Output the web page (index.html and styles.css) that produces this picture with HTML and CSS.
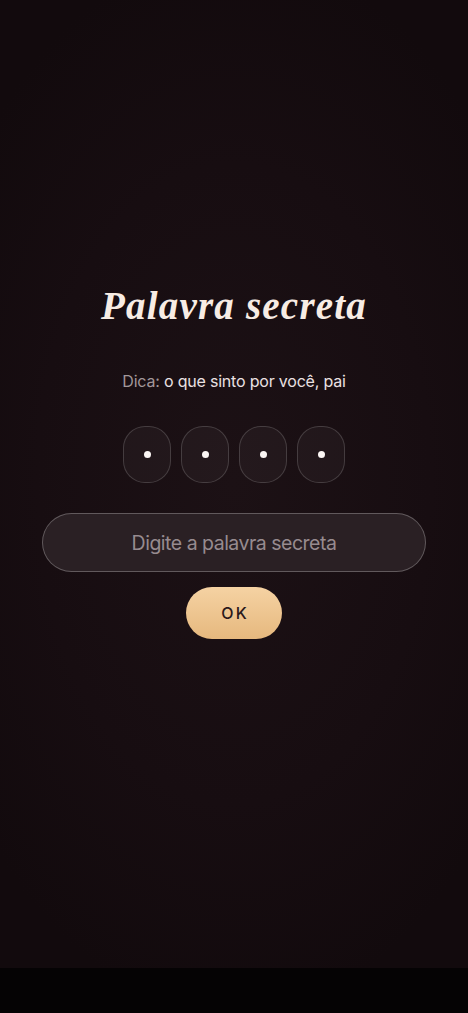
FILE: index.html
```html
<!DOCTYPE html>
<html lang="pt-BR">
<head>
<meta charset="utf-8">
<meta name="viewport" content="width=device-width, initial-scale=1">
<title>Palavra secreta</title>
<link rel="stylesheet" href="styles.css">
</head>
<body>
<main class="screen">
  <section class="lock">
    <h1 class="title">Palavra secreta</h1>
    <p class="hint"><span class="hint-label">Dica:</span> o que sinto por você, pai</p>
    <div class="slots">
      <div class="slot"><span class="dot"></span></div>
      <div class="slot"><span class="dot"></span></div>
      <div class="slot"><span class="dot"></span></div>
      <div class="slot"><span class="dot"></span></div>
    </div>
    <form class="form">
      <input class="field" type="text" placeholder="Digite a palavra secreta">
      <button class="ok" type="button">OK</button>
    </form>
  </section>
</main>
<div class="bottom"></div>
</body>
</html>
```
FILE: styles.css
```css
* { box-sizing: border-box; }
html, body { margin: 0; padding: 0; }
body {
  background: #050304;
  font-family: Inter, "Noto Sans", sans-serif;
}
.screen {
  height: 968px;
  background:
    radial-gradient(ellipse 70% 55% at 50% 50%, #1c1115 0%, #170d11 60%, #120a0d 100%);
  display: flex;
  flex-direction: column;
  align-items: center;
}
.lock {
  width: 100%;
  padding: 283px 42px 0;
  display: flex;
  flex-direction: column;
  align-items: center;
}
.title {
  margin: 0;
  font-family: "Liberation Serif", "DejaVu Serif", serif;
  font-style: italic;
  font-weight: 700;
  font-size: 39px;
  line-height: 46px;
  color: #f7ece4;
  letter-spacing: 1.2px;
}
.hint {
  margin: 41px 0 0;
  font-size: 16px;
  line-height: 22px;
  letter-spacing: -0.2px;
  color: #eae1e2;
}
.hint-label { color: #a2979a; }
.slots {
  margin-top: 34px;
  display: flex;
  gap: 10px;
}
.slot {
  width: 48px;
  height: 57px;
  border-radius: 22px;
  border: 1px solid rgba(255, 255, 255, 0.16);
  background: rgba(255, 255, 255, 0.035);
  display: flex;
  align-items: center;
  justify-content: center;
}
.dot {
  width: 7px;
  height: 7px;
  border-radius: 50%;
  background: #fbf6f4;
}
.form {
  width: 100%;
  margin: 30px 0 0;
  display: flex;
  flex-direction: column;
  align-items: center;
  gap: 15px;
}
.field {
  width: 100%;
  height: 59px;
  border-radius: 30px;
  border: 1px solid rgba(255, 255, 255, 0.26);
  background: #2a2024;
  color: #eae1e2;
  font-family: inherit;
  font-size: 19.5px;
  letter-spacing: -0.5px;
  text-align: center;
  outline: none;
}
.field::placeholder { color: #978b8f; }
.ok {
  width: 96px;
  height: 52px;
  border: none;
  border-radius: 26px;
  background: linear-gradient(180deg, #f5d2a3 0%, #e6b87e 100%);
  color: #2a181b;
  font-family: inherit;
  font-size: 16px;
  font-weight: 500;
  letter-spacing: 2px;
  padding: 0 0 0 2px;
  cursor: pointer;
}
.bottom {
  height: 45px;
  background: #050304;
}
```
